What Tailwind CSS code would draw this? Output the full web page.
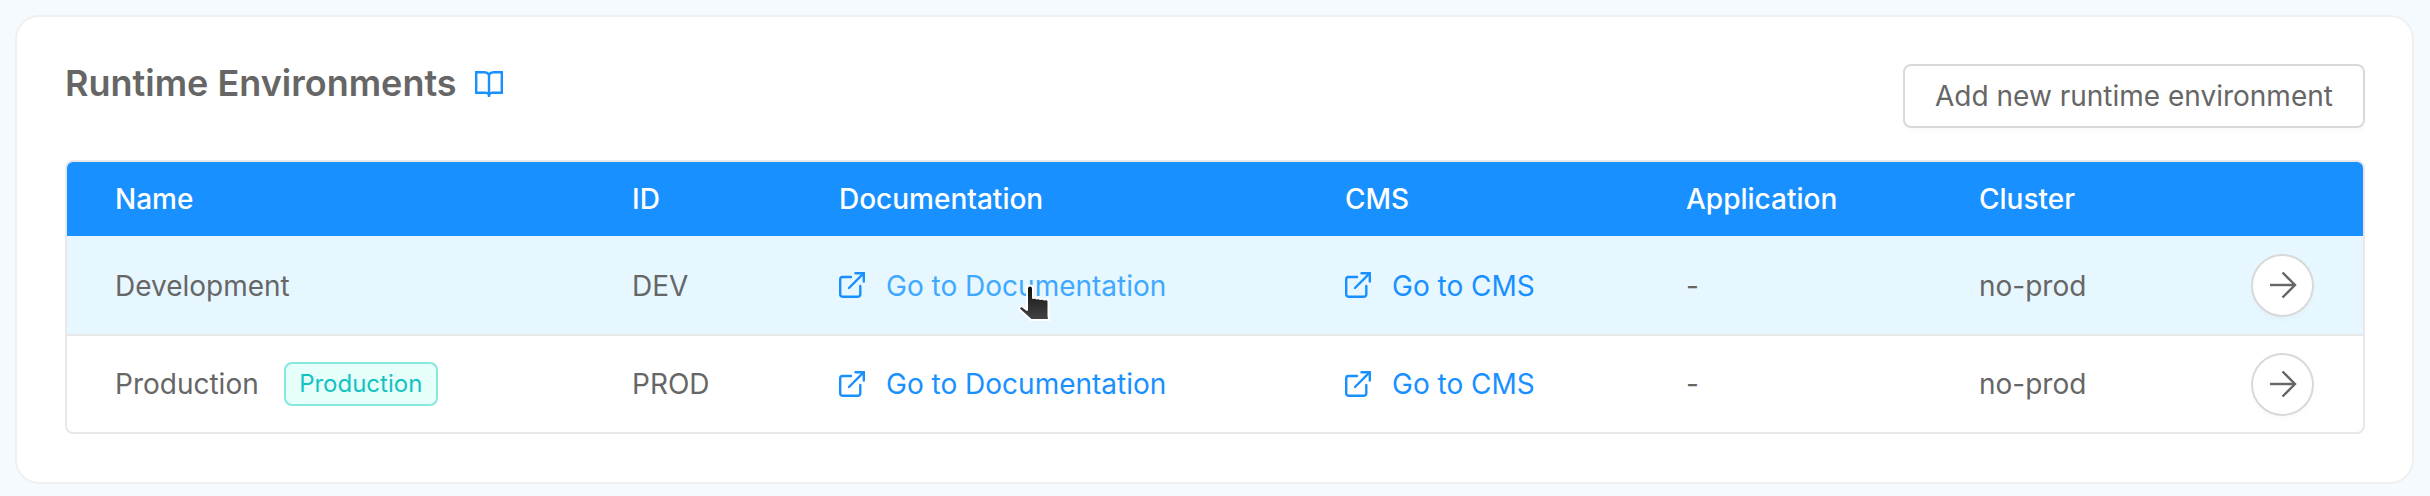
<!DOCTYPE html>
<html lang="en">
<head>
  <meta charset="UTF-8">
  <title>Runtime Environments</title>
  <script src="https://cdn.jsdelivr.net/npm/@tailwindcss/browser@4"></script>
</head>
<body class="bg-[#f5faff] h-[496px] overflow-hidden font-['Inter',sans-serif] text-[28px] text-[#666666]">
  <div class="ml-[15px] mt-[15px] w-[2399px] h-[469px] bg-white border-2 border-[#f0f0f0] rounded-[24px] pt-[47px] pl-[48px] pr-[47px]">

    <!-- header -->
    <div class="flex justify-between items-start h-[96px]">
      <div class="flex items-center h-[40px]">
        <h1 class="text-[36px] font-semibold leading-[40px] mb-[2px]">Runtime Environments</h1>
        <svg class="ml-[18px] w-[28px] h-[26px] text-[#1890ff]" viewBox="0 0 28 26" fill="none" stroke="currentColor" stroke-width="2.4">
          <path d="M14 3.500C13 2 11.500 1.200 9.500 1.200H1.200V21.800H10.500C12 21.800 13.200 22.300 14 23.500C14.800 22.300 16 21.800 17.500 21.800H26.800V1.200H18.500C16.500 1.200 15 2 14 3.500Z"/>
          <path d="M14 3.500V26"/>
        </svg>
      </div>
      <button class="w-[462px] h-[64px] bg-white border-2 border-[#d9d9d9] rounded-[8px] shadow-[0_4px_4px_rgba(0,0,0,0.02)] text-[#666666]">Add new runtime environment</button>
    </div>

    <!-- table -->
    <div class="border-2 border-[#e8e8e8] rounded-[8px] h-[274px] w-[2300px] overflow-hidden">
      <div class="grid grid-cols-[517px_207px_506px_341px_293px_1fr] items-center h-[74px] pl-[48px] bg-[#1890ff] text-white font-medium">
        <div>Name</div>
        <div>ID</div>
        <div>Documentation</div>
        <div>CMS</div>
        <div>Application</div>
        <div>Cluster</div>
      </div>

      <div class="relative grid grid-cols-[517px_207px_506px_341px_293px_1fr] items-center h-[100px] pl-[48px] bg-[#e6f7ff] border-b-2 border-b-[#e8e8e8]">
        <div class="pt-[2px]">Development</div>
        <div class="pt-[2px]">DEV</div>
        <a class="flex items-center text-[#40a9ff]">
          <svg class="w-[26px] h-[26px] mr-[21px] text-[#1890ff]" viewBox="0 0 26 26" fill="none" stroke="currentColor" stroke-width="2.4" stroke-linecap="round" stroke-linejoin="round"><path d="M12 5H3.500A2.500 2.500 0 0 0 1.200 7.500V22.300A2.500 2.500 0 0 0 3.500 24.800H19A2.500 2.500 0 0 0 21.300 22.300V14"/><path d="M10 16L24.800 1.200"/><path d="M16.500 1.200H24.800V9.500"/></svg>
          <span class="pt-[2px]">Go to Documentation</span>
        </a>
        <a class="flex items-center text-[#1890ff]">
          <svg class="w-[26px] h-[26px] mr-[21px]" viewBox="0 0 26 26" fill="none" stroke="currentColor" stroke-width="2.4" stroke-linecap="round" stroke-linejoin="round"><path d="M12 5H3.500A2.500 2.500 0 0 0 1.200 7.500V22.300A2.500 2.500 0 0 0 3.500 24.800H19A2.500 2.500 0 0 0 21.300 22.300V14"/><path d="M10 16L24.800 1.200"/><path d="M16.500 1.200H24.800V9.500"/></svg>
          <span class="pt-[2px]">Go to CMS</span>
        </a>
        <div class="pt-[2px]">-</div>
        <div class="flex justify-between items-center pr-[49px]">
          <span class="pt-[2px]">no-prod</span>
          <button class="w-[63px] h-[63px] flex items-center justify-center bg-white border-2 border-[#d9d9d9] rounded-full shadow-[0_4px_4px_rgba(0,0,0,0.02)]">
            <svg class="w-[28px] h-[28px]" viewBox="0 0 28 28" fill="none" stroke="#666666" stroke-width="2.4"><path d="M1 14H26"/><path d="M13.500 1.500L26 14L13.500 26.500"/></svg>
          </button>
        </div>
        <!-- mouse pointer -->
        <svg class="absolute left-[949px] top-[48px] w-[38px] h-[40px]" viewBox="0 0 38 40">
          <defs><linearGradient id="hand" x1="0" y1="0" x2="0" y2="1"><stop offset="0" stop-color="#111111"/><stop offset="1" stop-color="#444444"/></linearGradient></defs>
          <path d="M11 4.500a3 3 0 0 1 6 0V14l2-.5 1.500 1 2-.5 1.500 1 2.500-.5 1.500 1 3-.5 1.500 2V31.500L33 36H15L3.500 25.500a2.200 2.200 0 0 1 3-3L11 26Z" fill="url(#hand)" stroke="#ffffff" stroke-width="2" stroke-linejoin="round"/>
        </svg>
      </div>

      <div class="grid grid-cols-[517px_207px_506px_341px_293px_1fr] items-center h-[96px] pl-[48px]">
        <div class="flex items-center">
          Production
          <span class="ml-[25px] h-[44px] w-[154px] flex items-center justify-center bg-[#e6fffb] border-2 border-[#87e8de] rounded-[8px] text-[24px] text-[#13c2c2]">Production</span>
        </div>
        <div>PROD</div>
        <a class="flex items-center text-[#1890ff]">
          <svg class="w-[26px] h-[26px] mr-[21px]" viewBox="0 0 26 26" fill="none" stroke="currentColor" stroke-width="2.4" stroke-linecap="round" stroke-linejoin="round"><path d="M12 5H3.500A2.500 2.500 0 0 0 1.200 7.500V22.300A2.500 2.500 0 0 0 3.500 24.800H19A2.500 2.500 0 0 0 21.300 22.300V14"/><path d="M10 16L24.800 1.200"/><path d="M16.500 1.200H24.800V9.500"/></svg>
          Go to Documentation
        </a>
        <a class="flex items-center text-[#1890ff]">
          <svg class="w-[26px] h-[26px] mr-[21px]" viewBox="0 0 26 26" fill="none" stroke="currentColor" stroke-width="2.4" stroke-linecap="round" stroke-linejoin="round"><path d="M12 5H3.500A2.500 2.500 0 0 0 1.200 7.500V22.300A2.500 2.500 0 0 0 3.500 24.800H19A2.500 2.500 0 0 0 21.300 22.300V14"/><path d="M10 16L24.800 1.200"/><path d="M16.500 1.200H24.800V9.500"/></svg>
          Go to CMS
        </a>
        <div>-</div>
        <div class="flex justify-between items-center pr-[49px]">
          no-prod
          <button class="w-[63px] h-[63px] flex items-center justify-center bg-white border-2 border-[#d9d9d9] rounded-full shadow-[0_4px_4px_rgba(0,0,0,0.02)]">
            <svg class="w-[28px] h-[28px]" viewBox="0 0 28 28" fill="none" stroke="#666666" stroke-width="2.4"><path d="M1 14H26"/><path d="M13.500 1.500L26 14L13.500 26.500"/></svg>
          </button>
        </div>
      </div>
    </div>
  </div>
</body>
</html>
